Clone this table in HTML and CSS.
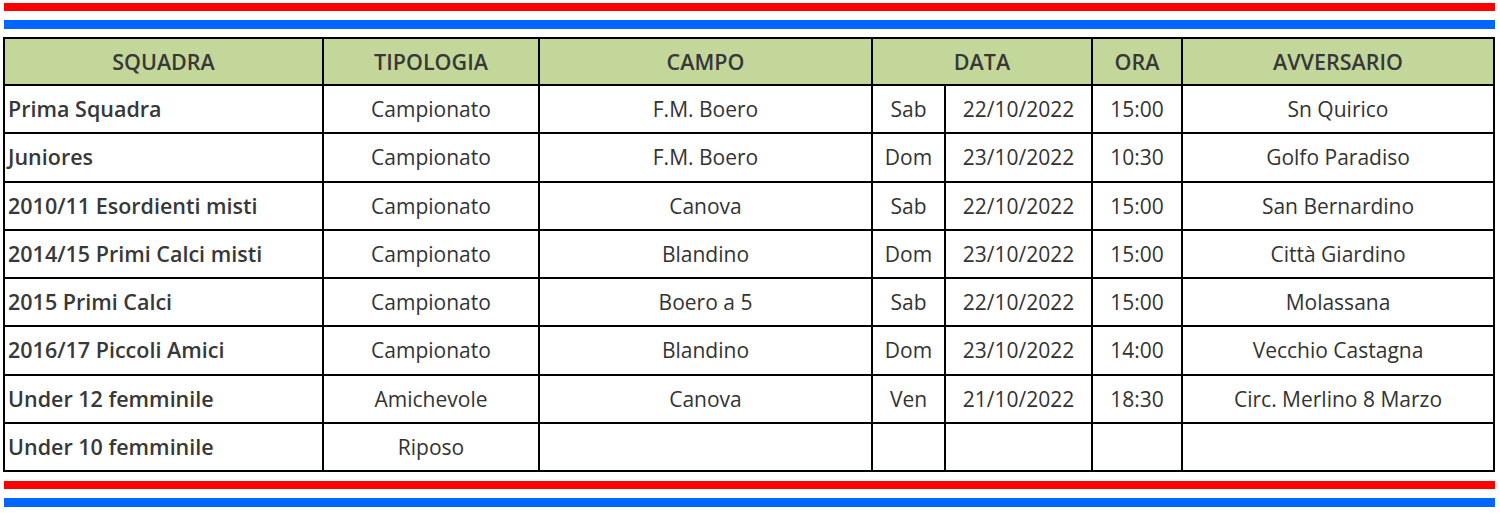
FILE: index.html
```html
<!DOCTYPE html>
<html lang="it">
<head>
<meta charset="utf-8">
<title>Partite</title>
<link rel="stylesheet" href="styles.css">
</head>
<body>
<div class="page">
  <div class="stripes">
    <div class="stripe red"></div>
    <div class="stripe blue"></div>
  </div>
  <table class="sched">
    <colgroup>
      <col class="c1"><col class="c2"><col class="c3"><col class="c4"><col class="c5"><col class="c6"><col class="c7">
    </colgroup>
    <thead>
      <tr>
        <th>SQUADRA</th><th>TIPOLOGIA</th><th>CAMPO</th><th colspan="2">DATA</th><th>ORA</th><th>AVVERSARIO</th>
      </tr>
    </thead>
    <tbody>
      <tr><td class="team">Prima Squadra</td><td>Campionato</td><td>F.M. Boero</td><td>Sab</td><td>22/10/2022</td><td>15:00</td><td>Sn Quirico</td></tr>
      <tr><td class="team">Juniores</td><td>Campionato</td><td>F.M. Boero</td><td>Dom</td><td>23/10/2022</td><td>10:30</td><td>Golfo Paradiso</td></tr>
      <tr><td class="team">2010/11 Esordienti misti</td><td>Campionato</td><td>Canova</td><td>Sab</td><td>22/10/2022</td><td>15:00</td><td>San Bernardino</td></tr>
      <tr><td class="team">2014/15 Primi Calci misti</td><td>Campionato</td><td>Blandino</td><td>Dom</td><td>23/10/2022</td><td>15:00</td><td>Città Giardino</td></tr>
      <tr><td class="team">2015 Primi Calci</td><td>Campionato</td><td>Boero a 5</td><td>Sab</td><td>22/10/2022</td><td>15:00</td><td>Molassana</td></tr>
      <tr><td class="team">2016/17 Piccoli Amici</td><td>Campionato</td><td>Blandino</td><td>Dom</td><td>23/10/2022</td><td>14:00</td><td>Vecchio Castagna</td></tr>
      <tr><td class="team">Under 12 femminile</td><td>Amichevole</td><td>Canova</td><td>Ven</td><td>21/10/2022</td><td>18:30</td><td>Circ. Merlino 8 Marzo</td></tr>
      <tr><td class="team">Under 10 femminile</td><td>Riposo</td><td></td><td></td><td></td><td></td><td></td></tr>
    </tbody>
  </table>
  <div class="stripes bottom">
    <div class="stripe red"></div>
    <div class="stripe blue"></div>
  </div>
</div>
</body>
</html>
```
FILE: styles.css
```css
html, body {
  margin: 0;
  padding: 0;
  background: #ffffff;
}
.page {
  padding: 3px 5px 0 4px;
  width: 1491px;
  font-family: "Open Sans", Lato, sans-serif;
  color: #333333;
}
.stripes {
  display: flex;
  flex-direction: column;
  gap: 9px;
}
.stripes.bottom {
  margin-top: 9px;
}
.stripe {
  height: 8px;
}
.stripe.blue {
  height: 9px;
}
.red { background: #ff0000; }
.blue { background: #0066ff; }

.sched {
  margin: 8px 0 0 -1px;
  width: 1492px;
  border-collapse: collapse;
  table-layout: fixed;
  border: 2px solid #000;
}
.c1 { width: 319px; }
.c2 { width: 216px; }
.c3 { width: 333px; }
.c4 { width: 73px; }
.c5 { width: 147px; }
.c6 { width: 90px; }
.c7 { width: 312px; }
.sched th, .sched td {
  border: 2px solid #000;
  padding: 0;
  text-align: center;
  font-size: 21px;
  line-height: 26px;
  white-space: nowrap;
}
.sched th {
  height: 45px;
  background: #c4d79b;
  font-weight: 600;
  font-size: 21.5px;
  color: #383838;
}
.sched td {
  height: 46.25px;
  font-weight: 400;
}
.sched td.team {
  text-align: left;
  padding-left: 3px;
  font-weight: 600;
  font-size: 21.5px;
  color: #383838;
}
```
